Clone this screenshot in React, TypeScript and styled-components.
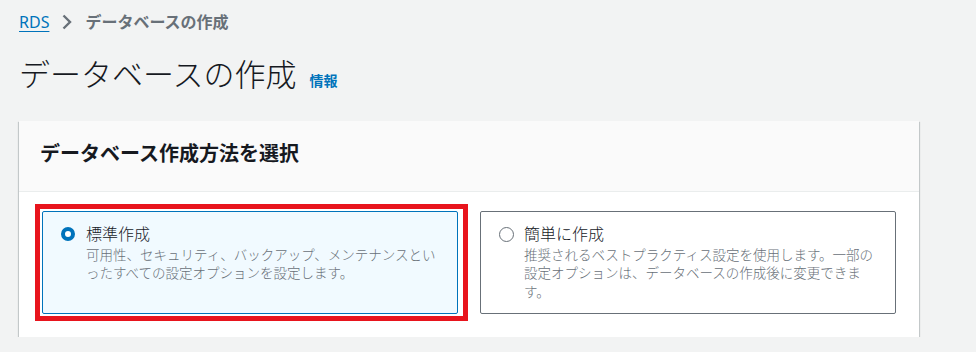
import React, { FC } from 'react';
import styled, { createGlobalStyle } from 'styled-components';

const BLUE = '#0073bb';
const GREY = '#687078';
const INK = '#16191f';

const GlobalStyle = createGlobalStyle`
  body {
    margin: 0;
    background-color: #f2f3f3;
    font-family: "Noto Sans", "Noto Sans CJK JP", sans-serif;
    color: ${INK};
  }
`;

const Page = styled.div`
  padding: 12px 19px 0;
`;

const Breadcrumbs = styled.nav`
  display: flex;
  align-items: center;
  gap: 13px;
  height: 20px;
  font-size: 16px;
  line-height: 20px;
`;

const CrumbLink = styled.a`
  color: ${BLUE};
  text-decoration: underline;
  text-underline-offset: 3px;
  text-decoration-thickness: 1px;
`;

const CrumbCurrent = styled.span`
  color: ${GREY};
  font-weight: 700;
`;

const TitleRow = styled.div`
  display: flex;
  align-items: baseline;
  gap: 13px;
  margin-top: 22px;
`;

const Title = styled.h1`
  margin: 0;
  font-size: 31px;
  font-weight: 300;
  line-height: 40px;
  color: ${INK};
`;

const InfoLink = styled.a`
  color: ${BLUE};
  font-size: 14px;
  font-weight: 700;
`;

const Card = styled.section`
  width: 900px;
  margin-top: 27px;
  background-color: #ffffff;
  box-shadow: 0 1px 1px 0 rgba(0, 28, 36, 0.3), 1px 1px 1px 0 rgba(0, 28, 36, 0.15),
    -1px 1px 1px 0 rgba(0, 28, 36, 0.15);
`;

const CardHeader = styled.header`
  padding: 20px 20px 24px 21px;
  background-color: #fafafa;
  border-bottom: 1px solid #eaeded;
`;

const CardTitle = styled.h2`
  margin: 0;
  font-size: 20px;
  font-weight: 700;
  line-height: 26px;
`;

const TileGrid = styled.div`
  display: grid;
  grid-template-columns: 1fr 1fr;
  gap: 22px;
  padding: 19px 23px 23px;
`;

const Tile = styled.label<{ $selected?: boolean; $marked?: boolean }>`
  position: relative;
  display: flex;
  align-items: flex-start;
  gap: 11px;
  padding: 12px 18px;
  border: 1px solid ${(p) => (p.$selected ? BLUE : GREY)};
  border-radius: 2px;
  background-color: ${(p) => (p.$selected ? '#f1faff' : '#ffffff')};
  ${(p) =>
    p.$marked &&
    `
    &::after {
      content: '';
      position: absolute;
      top: -8px;
      left: -8px;
      right: -11px;
      bottom: -8px;
      border: 5px solid #e8141d;
      pointer-events: none;
    }
  `}
`;

const Radio = styled.span<{ $checked?: boolean }>`
  flex: none;
  box-sizing: border-box;
  width: ${(p) => (p.$checked ? 14 : 15)}px;
  height: ${(p) => (p.$checked ? 14 : 15)}px;
  margin-top: 3px;
  margin-right: ${(p) => (p.$checked ? 0 : -1)}px;
  border-radius: 50%;
  background-color: #ffffff;
  border: ${(p) => (p.$checked ? `4px solid ${BLUE}` : `1.5px solid ${GREY}`)};
`;

const TileText = styled.div`
  display: flex;
  flex-direction: column;
  min-width: 0;
`;

const TileLabel = styled.span`
  font-size: 16px;
  font-weight: 300;
  line-height: 20px;
  color: ${INK};
`;

const TileDesc = styled.span`
  margin-top: 2px;
  font-size: 13.5px;
  font-weight: 300;
  line-height: 18.4px;
  color: ${GREY};
`;

const Chevron: FC = () => (
  <svg width="10" height="16" viewBox="0 0 10 16" aria-hidden="true">
    <polyline points="1.5,1.5 8,8 1.5,14.5" fill="none" stroke={GREY} strokeWidth="2.4" />
  </svg>
);

type Option = {
  label: string;
  desc: string;
  selected?: boolean;
};

const options: Option[] = [
  {
    label: '標準作成',
    desc: '可用性、セキュリティ、バックアップ、メンテナンスといったすべての設定オプションを設定します。',
    selected: true,
  },
  {
    label: '簡単に作成',
    desc: '推奨されるベストプラクティス設定を使用します。一部の設定オプションは、データベースの作成後に変更できます。',
  },
];

const App: FC = () => {
  return (
    <Page lang="ja">
      <GlobalStyle />
      <Breadcrumbs>
        <CrumbLink>RDS</CrumbLink>
        <Chevron />
        <CrumbCurrent>データベースの作成</CrumbCurrent>
      </Breadcrumbs>
      <TitleRow>
        <Title>データベースの作成</Title>
        <InfoLink>情報</InfoLink>
      </TitleRow>
      <Card>
        <CardHeader>
          <CardTitle>データベース作成方法を選択</CardTitle>
        </CardHeader>
        <TileGrid>
          {options.map((o) => (
            <Tile key={o.label} $selected={o.selected} $marked={o.selected}>
              <Radio $checked={o.selected} />
              <TileText>
                <TileLabel>{o.label}</TileLabel>
                <TileDesc>{o.desc}</TileDesc>
              </TileText>
            </Tile>
          ))}
        </TileGrid>
      </Card>
    </Page>
  );
};

export default App;
